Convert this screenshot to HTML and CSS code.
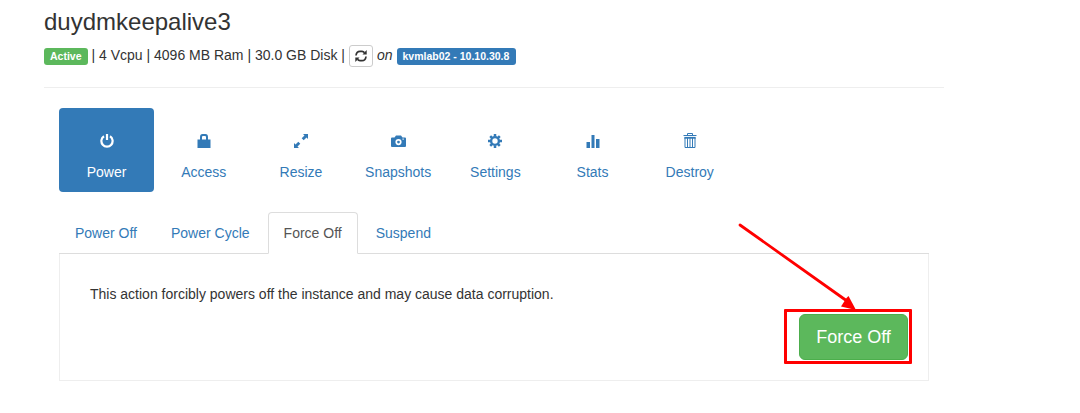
FILE: index.html
```html
<!DOCTYPE html>
<html lang="en">
<head>
<meta charset="utf-8">
<title>duydmkeepalive3</title>
<link rel="stylesheet" href="styles.css">
</head>
<body>
<main class="page">
  <header class="header">
    <h3 class="title">duydmkeepalive3</h3>
    <div class="meta">
      <span class="label label-success">Active</span>
      <span class="specs">| 4 Vcpu | 4096 MB Ram | 30.0 GB Disk |</span>
      <button class="refresh" aria-label="Refresh"><svg width="12" height="12" viewBox="0 0 12 12" fill="none" stroke="currentColor" stroke-width="1.7"><path d="M1 5.500C1.300 2.800 3 1.300 5 1.300H7Q8.500 1.500 9.500 2.800M11 6.500C10.700 9.200 9 10.700 7 10.700H5Q3.500 10.500 2.500 9.200"/><path d="M11.700 0v4.500H7.500zM.3 12V7.500h4.200z" fill="currentColor" stroke="none"/></svg></button>
      <em class="on">on</em>
      <span class="label label-primary">kvmlab02 - 10.10.30.8</span>
    </div>
  </header>
  <section class="content">
    <nav class="pills">
      <a class="pill active"><svg class="icon" viewBox="0 0 14 14"><path d="M4 2.300A5.600 5.600 0 1 0 10 2.300M7 0V6" fill="none" stroke="currentColor" stroke-width="2.200"/></svg>Power</a>
      <a class="pill"><svg class="icon" viewBox="0 0 14 14"><path fill-rule="evenodd" d="M.5 5.500H3V3Q3 0 5.500 0H8.500Q11 0 11 3V5.500H13.500V14H.5zM5 5.500H9V3Q9 2 8 2H6Q5 2 5 3z"/></svg>Access</a>
      <a class="pill"><svg class="icon" viewBox="0 0 14 14"><path d="M9 0h5v5l-1.500-1.500-2.800 2.800-2-2L10.500 1.500zM0 14V9l1.500 1.500 2.800-2.800 2 2L3.500 12.500 5 14z"/></svg>Resize</a>
      <a class="pill"><svg class="icon icon-wide" viewBox="0 0 15 14"><path fill-rule="evenodd" d="M1 3.500h2.500L5 1.500h5l1.500 2H14q1 0 1 1V12q0 1-1 1H1q-1 0-1-1V4.500q0-1 1-1zM7.500 5A3.100 3.100 0 1 0 7.500 11.200A3.100 3.100 0 1 0 7.500 5zM11.500 4.500v1.200h1.200V4.500z"/><circle cx="7.500" cy="8.100" r="1.400"/></svg>Snapshots</a>
      <a class="pill"><svg class="icon" viewBox="0 0 14 14"><g fill="none" stroke="currentColor"><circle cx="7" cy="7" r="3.900" stroke-width="2.400"/><path stroke-width="2.500" d="M7 0v2.500M7 11.500V14M0 7h2.500M11.500 7H14M2.200 2.200l2 2M9.800 9.800l2 2M11.800 2.200l-2 2M4.200 9.800l-2 2"/></g></svg>Settings</a>
      <a class="pill"><svg class="icon" viewBox="0 0 14 14"><path d="M.5 8h3.500v6H.5zM5.500 1h3v13h-3zM10 5h3.500v9H10z"/></svg>Stats</a>
      <a class="pill"><svg class="icon icon-trash" viewBox="0 0 14 15"><g fill="none" stroke="currentColor"><path d="M4.500 2V.5h5V2M.5 2.500h13"/><path d="M2 5v9.500h10V5M4.500 5v9.500M7 5v9.500M9.500 5v9.500"/><path stroke-width="1.800" d="M1.300 4.800h11.400"/></g></svg>Destroy</a>
    </nav>
    <nav class="tabs">
      <a class="tab">Power Off</a>
      <a class="tab">Power Cycle</a>
      <a class="tab active">Force Off</a>
      <a class="tab">Suspend</a>
    </nav>
    <div class="panel">
      <p class="message">This action forcibly powers off the instance and may cause data corruption.</p>
      <div class="action">
        <button class="force">Force Off</button>
        <span class="highlight"></span>
        <svg class="arrow" width="122" height="92" viewBox="0 0 122 92"><path d="M3 3L110 79" stroke="#f00" stroke-width="2.800" stroke-linecap="round"/><path d="M119 88L104 84.500L109.500 76L111.500 74z" fill="#f00"/></svg>
      </div>
    </div>
  </section>
</main>
</body>
</html>
```
FILE: styles.css
```css
* { box-sizing: border-box; }
body {
  margin: 0;
  background: #fff;
  color: #333;
  font: 14px/20px "Liberation Sans", Arial, sans-serif;
}
.page { width: 900px; margin-left: 44px; }
.header { height: 88px; padding-top: 9px; border-bottom: 1px solid #eee; }
.title { margin: 0; font-size: 24px; font-weight: 400; line-height: 26px; }
.meta { display: flex; align-items: center; height: 22px; margin-top: 10px; white-space: nowrap; }
.label {
  height: 17px;
  margin-top: 1px;
  padding: 0 6px;
  border-radius: 3px;
  color: #fff;
  font-size: 10.5px;
  font-weight: 700;
  line-height: 17px;
}
.label-success { background: #5cb85c; }
.label-primary { width: 119px; background: #337ab7; }
.specs { margin: -2px 4px 0; }
.refresh {
  display: flex;
  align-items: center;
  justify-content: center;
  width: 24px;
  height: 22px;
  padding: 0;
  border: 1px solid #ccc;
  border-radius: 3px;
  background: #fff;
  color: #333;
}
.on { margin: -2px 4px 0; }
.content { padding: 20px 15px 0; }
.pills { display: flex; gap: 2px; }
.pill {
  display: flex;
  flex-direction: column;
  align-items: center;
  gap: 14px;
  width: 95.2px;
  height: 84px;
  padding-top: 26px;
  border-radius: 4px;
  color: #337ab7;
}
.pill.active { background: #337ab7; color: #fff; }
.icon { width: 14px; height: 14px; fill: currentColor; }
.icon-wide { width: 15px; }
.icon-trash { height: 15px; margin: -1px 0 0; }
.tabs { display: flex; gap: 2px; margin-top: 20px; border-bottom: 1px solid #ddd; }
.tab {
  height: 42px;
  margin-bottom: -1px;
  padding: 10px 15px;
  border: 1px solid transparent;
  border-radius: 4px 4px 0 0;
  color: #337ab7;
}
.tab.active { border-color: #ddd #ddd #fff; background: #fff; color: #555; }
.panel {
  height: 127px;
  padding: 30px 20px 0 30px;
  border: 1px solid #eee;
  border-top: 0;
}
.message { margin: 0; }
.action { position: relative; width: 109px; margin: 10px 0 0 auto; }
.force {
  display: block;
  width: 109px;
  height: 46px;
  padding: 0;
  border: 1px solid #4cae4c;
  border-radius: 6px;
  background: #5cb85c;
  color: #fff;
  font: 18px/24px "Liberation Sans", Arial, sans-serif;
}
.highlight {
  position: absolute;
  top: -5px;
  left: -15px;
  width: 128px;
  height: 55px;
  border: 3px solid #f00;
  border-radius: 1px;
}
.arrow { position: absolute; top: -92px; left: -62px; }
```
